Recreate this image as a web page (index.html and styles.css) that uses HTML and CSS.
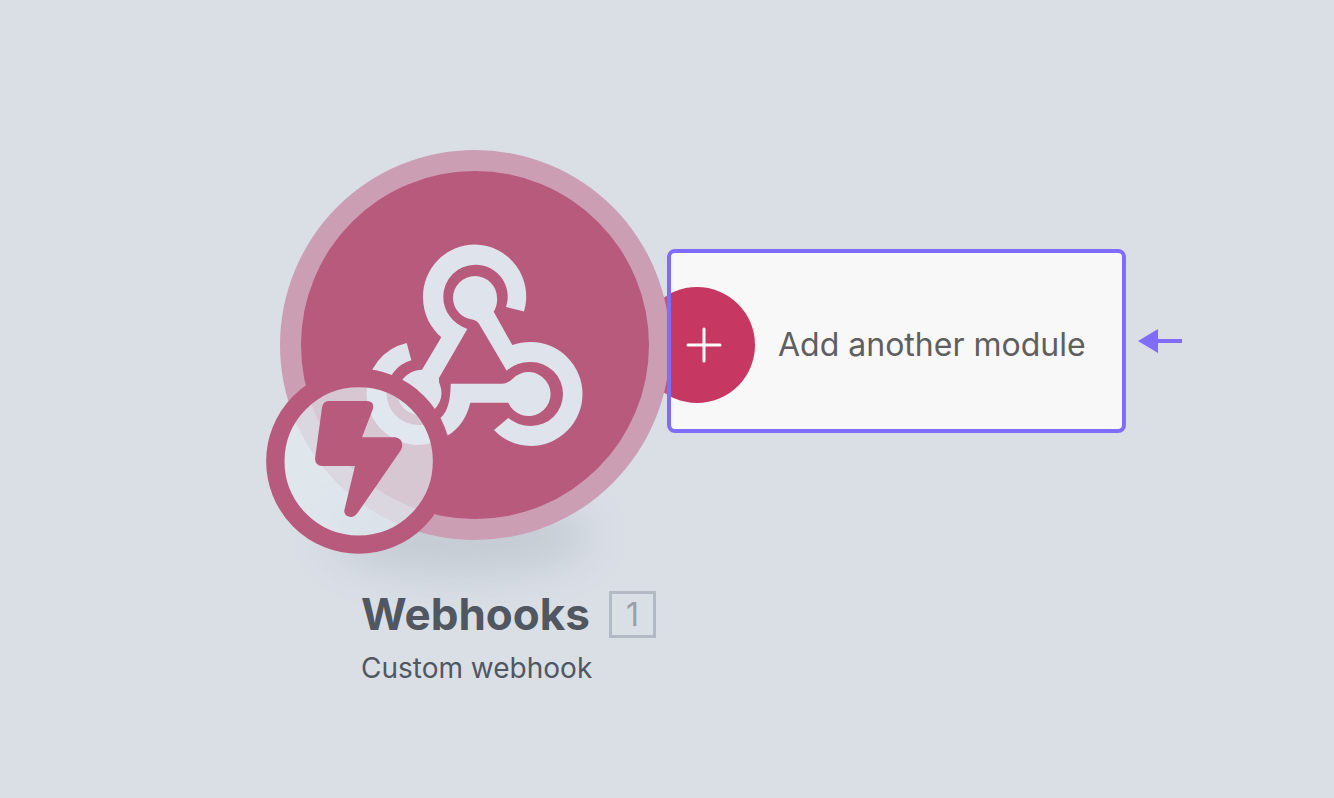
FILE: index.html
```html
<!DOCTYPE html>
<html lang="en">
<head>
<meta charset="utf-8">
<title>Webhooks scenario</title>
<link rel="stylesheet" href="styles.css">
</head>
<body>
<main class="canvas">
  <div class="flow">
    <div class="node">
      <svg class="node-disc" viewBox="280 150 390 390" aria-hidden="true">
        <circle class="port" cx="697" cy="345" r="58"/>
        <circle class="halo" cx="475" cy="345" r="195"/>
        <circle class="disc" cx="475" cy="345" r="174"/>
        <g class="hook">
          <path d="M524 311.500A52 52 0 0 0 475 244.500A52 52 0 0 0 423 297C423 315 431 328 441.300 337.300L422 369.700C414 370 408 373 402.500 379.500A22 22 0 0 0 397.500 393A22 22 0 0 0 419.500 415A22 22 0 0 0 441.500 394C441.500 388 440 385 439 382V378L467.300 329C452 323 443.300 311 443.300 297A32 32 0 0 1 475 264.700A32 32 0 0 1 506 307Z"/>
          <path d="M493.700 311.700A22 22 0 0 0 497 298A22 22 0 0 0 475 276A22 22 0 0 0 453 298A22 22 0 0 0 472 319.500C476 320 478 322 479.300 324.300L506.700 370.700A34 34 0 0 1 531 362A32 32 0 0 1 563 394A32 32 0 0 1 531 426C522 426 515 423 508.300 418L494 430A52 52 0 0 0 531 446A52 52 0 0 0 582.500 394A52 52 0 0 0 531 342C524 342 518 343 512.300 345Z"/>
          <path d="M450.700 383.700H502C506 383.700 510 381.500 513 378.500A22 22 0 1 1 508.300 402.700H470.300C467 417 459 429 448 435.300L440.700 417.700C448 411 450.500 400 450.700 383.700Z"/>
          <path d="M406.700 343A52 52 0 0 0 366.500 393A52 52 0 0 0 418.500 445A52 52 0 0 0 448 435.300L440.700 417.700A34 34 0 0 1 418.500 425A32 32 0 0 1 386.500 393A34 34 0 0 1 411.300 360.300Z"/>
        </g>
      </svg>
      <svg class="badge" viewBox="0 0 561 561" role="img" aria-label="Instant trigger">
        <circle class="badge-ring" cx="281" cy="280" r="250"/>
        <path class="bolt" d="M191 99H306Q329 101 324 122L291 208H391Q415 212 411 238L408 246L279 433Q270 447 257 447Q236 445 238 427L270 294H171Q151 292 150 272L171 119Q174 100 191 99Z"/>
      </svg>
    </div>
    <button class="add" type="button">
      <svg class="add-icon" viewBox="0 0 84 116" aria-hidden="true">
        <circle cx="26" cy="58" r="58"/>
        <path d="M17 58H49M33 42V74"/>
      </svg>
      <span>Add another module</span>
    </button>
    <svg class="arrow" viewBox="0 0 44 24" aria-hidden="true">
      <path d="M0 12L20 0V10H44V14H20V24Z"/>
    </svg>
  </div>
  <div class="caption">
    <div class="title-row">
      <h1>Webhooks</h1>
      <span class="count">1</span>
    </div>
    <p>Custom webhook</p>
  </div>
</main>
</body>
</html>
```
FILE: styles.css
```css
* { box-sizing: border-box; }

body {
  margin: 0;
  background: #dadfe6;
  font-family: Inter, "Liberation Sans", sans-serif;
}

.canvas {
  min-height: 100vh;
  padding: 150px 0 0 280px;
}

.flow {
  display: flex;
  align-items: center;
}

.node {
  position: relative;
  flex: none;
  width: 390px;
  height: 390px;
}

.node::before {
  content: "";
  position: absolute;
  left: 50px;
  bottom: -36px;
  width: 260px;
  height: 80px;
  border-radius: 50%;
  background: rgba(95, 108, 125, 0.16);
  filter: blur(20px);
}

.node-disc {
  position: relative;
  display: block;
  width: 100%;
  height: 100%;
}

.port, .disc { fill: #b85a7b; }
.halo { fill: #cc9eb3; }
.hook { fill: #dfe3eb; }

.badge {
  position: absolute;
  left: -15px;
  top: 218px;
  width: 187px;
  height: 187px;
}

.badge-ring {
  fill: rgba(224, 231, 238, 0.77);
  stroke: #b85a7b;
  stroke-width: 55;
}

.bolt { fill: #b85a7b; }

.add {
  position: relative;
  display: flex;
  align-items: center;
  gap: 23px;
  flex: none;
  height: 184px;
  margin: 0 12px 8px -3px;
  padding: 8px 36px 0 0;
  border: 4px solid #806cfa;
  border-radius: 8px;
  background: #f8f8f8;
  color: #5f5f5f;
  font: 400 32px/40px Inter, "Liberation Sans", sans-serif;
  white-space: nowrap;
}

.add-icon {
  width: 84px;
  height: 116px;
  fill: #c63862;
}

.add-icon path {
  stroke: #fff;
  stroke-width: 3;
  stroke-linecap: round;
}

.arrow {
  flex: none;
  width: 44px;
  height: 24px;
  margin-bottom: 8px;
  fill: #806cfa;
}

.caption {
  position: relative;
  padding: 48px 0 0 81px;
  color: #505761;
}

.title-row {
  display: flex;
  align-items: center;
  gap: 19px;
}

h1 {
  margin: 0;
  font-size: 44px;
  line-height: 52px;
  font-weight: 700;
}

.count {
  width: 47px;
  height: 47px;
  border: 3px solid #b4bac4;
  color: #999fa9;
  font-size: 32px;
  line-height: 41px;
  text-align: center;
}

p {
  margin: 10px 0 0;
  font-size: 28px;
  line-height: 36px;
}
```
